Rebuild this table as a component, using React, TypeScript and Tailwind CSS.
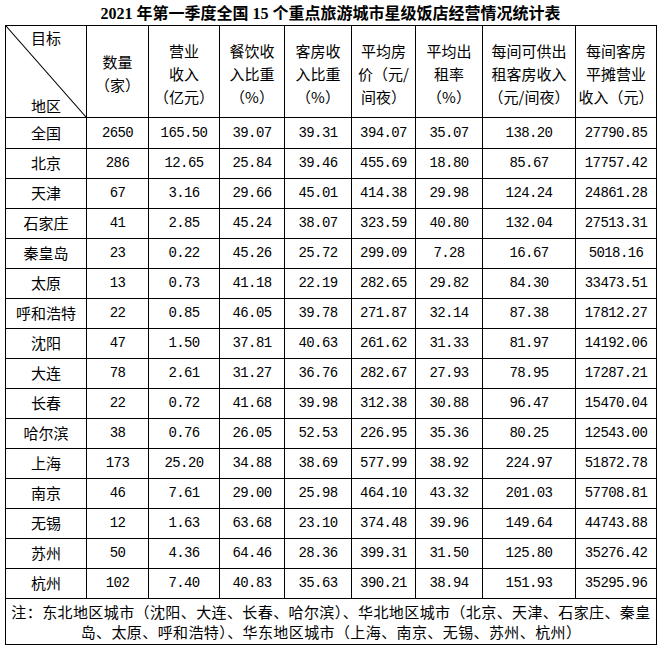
import React from "react";

// column widths (each includes its right border)
const cols = "grid grid-cols-[81px_62px_71px_65px_67px_64px_67px_93px_81px]";

const headers: string[][] = [
  ["数量", "（家）"],
  ["营业", "收入", "（亿元）"],
  ["餐饮收", "入比重", "（%）"],
  ["客房收", "入比重", "（%）"],
  ["平均房", "价（元/", "间夜）"],
  ["平均出", "租率", "（%）"],
  ["每间可供出", "租客房收入", "（元/间夜）"],
  ["每间客房", "平摊营业", "收入（元）"],
];

const rows: string[][] = [
  ["全国", "2650", "165.50", "39.07", "39.31", "394.07", "35.07", "138.20", "27790.85"],
  ["北京", "286", "12.65", "25.84", "39.46", "455.69", "18.80", "85.67", "17757.42"],
  ["天津", "67", "3.16", "29.66", "45.01", "414.38", "29.98", "124.24", "24861.28"],
  ["石家庄", "41", "2.85", "45.24", "38.07", "323.59", "40.80", "132.04", "27513.31"],
  ["秦皇岛", "23", "0.22", "45.26", "25.72", "299.09", "7.28", "16.67", "5018.16"],
  ["太原", "13", "0.73", "41.18", "22.19", "282.65", "29.82", "84.30", "33473.51"],
  ["呼和浩特", "22", "0.85", "46.05", "39.78", "271.87", "32.14", "87.38", "17812.27"],
  ["沈阳", "47", "1.50", "37.81", "40.63", "261.62", "31.33", "81.97", "14192.06"],
  ["大连", "78", "2.61", "31.27", "36.76", "282.67", "27.93", "78.95", "17287.21"],
  ["长春", "22", "0.72", "41.68", "39.98", "312.38", "30.88", "96.47", "15470.04"],
  ["哈尔滨", "38", "0.76", "26.05", "52.53", "226.95", "35.36", "80.25", "12543.00"],
  ["上海", "173", "25.20", "34.88", "38.69", "577.99", "38.92", "224.97", "51872.78"],
  ["南京", "46", "7.61", "29.00", "25.98", "464.10", "43.32", "201.03", "57708.81"],
  ["无锡", "12", "1.63", "63.68", "23.10", "374.48", "39.96", "149.64", "44743.88"],
  ["苏州", "50", "4.36", "64.46", "28.36", "399.31", "31.50", "125.80", "35276.42"],
  ["杭州", "102", "7.40", "40.83", "35.63", "390.21", "38.94", "151.93", "35295.96"],
];

const cjk = "font-['Noto_Sans_CJK_SC',sans-serif]";
const mono = "font-['Liberation_Mono','Noto_Sans_CJK_SC',monospace]";

export default function App() {
  return (
    <div className={`w-[661px] h-[653px] bg-white text-black ${cjk}`}>
      <div className="h-[25px] flex items-center justify-center pt-[2px] text-[16px] font-bold font-['Liberation_Serif','Noto_Sans_CJK_SC',serif]">
        2021 年第一季度全国 15 个重点旅游城市星级饭店经营情况统计表
      </div>

      <div className="ml-[5px] w-[652px] border-l border-t border-black">
        {/* header */}
        <div className={`${cols} h-[92px]`}>
          <div className="relative border-r border-b border-black flex flex-col justify-between items-center text-[15px]">
            <svg
              className="absolute inset-0 w-full h-full"
              viewBox="0 0 100 100"
              preserveAspectRatio="none"
            >
              <line x1="0" y1="0" x2="100" y2="100" stroke="#000" strokeWidth="1" vectorEffect="non-scaling-stroke" />
            </svg>
            <span className="leading-[24px]">目标</span>
            <span className="leading-[22px]">地区</span>
          </div>
          {headers.map((h, i) => (
            <div
              key={i}
              className="border-r border-b border-black flex flex-col items-center justify-center pt-[3px] text-[15px] leading-[23px] whitespace-nowrap"
            >
              {h.map((line, j) => (
                <span key={j}>{line}</span>
              ))}
            </div>
          ))}
        </div>

        {/* data rows */}
        {rows.map((r, i) => (
          <div key={r[0]} className={`${cols} ${i === 0 ? "h-[31px]" : "h-[30px]"}`}>
            {r.map((v, j) => (
              <div
                key={j}
                className={
                  "border-r border-b border-black flex items-center justify-center whitespace-nowrap " +
                  (j === 0 ? "text-[15px]" : `${mono} text-[14px] tracking-[-0.6px]`)
                }
              >
                {v}
              </div>
            ))}
          </div>
        ))}

        {/* note */}
        <div className="h-[46px] border-r border-b border-black flex flex-col items-center justify-center text-[15px] leading-[20px] tracking-[0.4px] whitespace-nowrap">
          <span>注：东北地区城市（沈阳、大连、长春、哈尔滨）、华北地区城市（北京、天津、石家庄、秦皇</span>
          <span>岛、太原、呼和浩特）、华东地区城市（上海、南京、无锡、苏州、杭州）</span>
        </div>
      </div>
    </div>
  );
}
